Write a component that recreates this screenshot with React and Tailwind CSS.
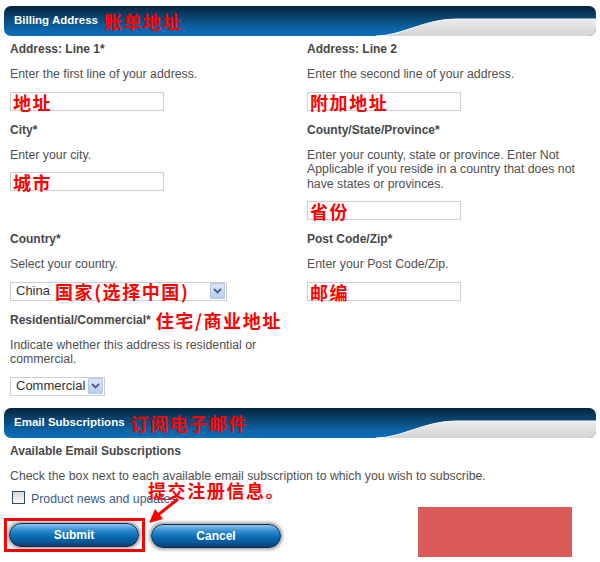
import React from 'react';

const sans = { fontFamily: '"Liberation Sans", Arial, sans-serif' };

// red hand-written notes laid over the form
function Note({ children, className = '' }) {
  return (
    <span
      className={`font-bold text-[18px] leading-none tracking-[1.6px] text-[#ff0000] ${className}`}
      style={{ fontFamily: '"Noto Sans CJK SC", "Noto Sans", sans-serif' }}
    >
      {children}
    </span>
  );
}

function SectionBar({ id, title, note }) {
  return (
    <div className="relative mx-[4px] h-[30px] overflow-hidden rounded-[7px]">
      <svg className="absolute inset-0 h-full w-full" viewBox="0 0 592 30" preserveAspectRatio="none">
        <defs>
          <linearGradient id={`${id}-blue`} x1="0" y1="0" x2="0" y2="1">
            <stop offset="0" stopColor="#05233d" />
            <stop offset="0.4" stopColor="#0a4774" />
            <stop offset="0.75" stopColor="#0a63a6" />
            <stop offset="1" stopColor="#0b70bb" />
          </linearGradient>
          <linearGradient id={`${id}-gray`} x1="0" y1="0" x2="0" y2="1">
            <stop offset="0" stopColor="#ececec" />
            <stop offset="1" stopColor="#d4d4d4" />
          </linearGradient>
        </defs>
        <rect width="592" height="30" fill={`url(#${id}-blue)`} />
        <path d="M372 30 C398 30 420 13 452 13 L592 13 L592 30 Z" fill={`url(#${id}-gray)`} />
        <path d="M372 30 C398 30 420 13 452 13 L592 13" fill="none" stroke="#f7f7f7" strokeWidth="1" />
      </svg>
      <div className="relative flex h-full items-center pl-[10px]">
        <span className="text-[11.5px] font-bold text-white">{title}</span>
        <Note className="ml-[6px]">{note}</Note>
      </div>
    </div>
  );
}

function Field({ label, labelNote, desc, children }) {
  return (
    <div className="flex flex-col items-start pb-[12px]">
      <div className="flex h-[15px] items-center">
        <span className="text-[12px] font-bold leading-[15px] text-[#474747]">{label}</span>
        {labelNote && <Note className="ml-[5px]">{labelNote}</Note>}
      </div>
      <p className="mt-[10px] text-[12.3px] leading-[14.5px] text-[#505050]">{desc}</p>
      <div className="mt-[10px]">{children}</div>
    </div>
  );
}

function TextBox({ value }) {
  return (
    <div className="flex h-[19px] w-[154px] items-center overflow-visible border border-[#cfcfcf] bg-white pl-[2px] pt-[1px]">
      <Note>{value}</Note>
    </div>
  );
}

function SelectBox({ width, value, note }) {
  return (
    <div className={`flex h-[19px] items-center border border-[#cfcfcf] bg-white pl-[5px] pr-[1px] ${width}`}>
      <span className="text-[13px] text-[#333]">{value}</span>
      {note && <Note className="ml-[5px]">{note}</Note>}
      <div className="ml-auto flex h-[16px] w-[15px] items-center justify-center rounded-[1px] border border-[#b5c7e8] bg-[linear-gradient(to_bottom,#dbe6f8,#b9cdef)]">
        <svg width="9" height="6" viewBox="0 0 9 6">
          <path d="M1 1 L4.5 4.5 L8 1" fill="none" stroke="#4d5f82" strokeWidth="1.8" />
        </svg>
      </div>
    </div>
  );
}

function BlueButton({ children }) {
  return (
    <button className="flex h-[24px] w-[130px] items-center justify-center rounded-full border border-[#0a2c4c] bg-[linear-gradient(to_bottom,#8cc2ec_0%,#2e8ad0_30%,#0a6cb4_55%,#0a5898_80%,#073f70_100%)] text-[12px] font-bold text-white shadow-[0_0_3px_2px_rgba(70,70,70,0.45)]">
      {children}
    </button>
  );
}

export default function App() {
  return (
    <div className="relative h-[562px] w-[600px] overflow-hidden bg-white pt-[6px]" style={sans}>
      <SectionBar id="billing" title="Billing Address" note="账单地址" />

      <div className="mt-[6px] grid grid-cols-[297px_1fr] pl-[10px]">
        <Field label="Address: Line 1*" desc="Enter the first line of your address.">
          <TextBox value="地址" />
        </Field>
        <Field label="Address: Line 2" desc="Enter the second line of your address.">
          <TextBox value="附加地址" />
        </Field>

        <Field label="City*" desc="Enter your city.">
          <TextBox value="城市" />
        </Field>
        <Field
          label="County/State/Province*"
          desc={<>Enter your county, state or province. Enter Not<br />Applicable if you reside in a country that does not<br />have states or provinces.</>}
        >
          <TextBox value="省份" />
        </Field>

        <div>
          <Field label="Country*" desc="Select your country.">
            <SelectBox width="w-[217px]" value="China" note="国家(选择中国)" />
          </Field>
          <Field
            label="Residential/Commercial*"
            labelNote="住宅/商业地址"
            desc={<>Indicate whether this address is residential or<br />commercial.</>}
          >
            <SelectBox width="w-[95px]" value="Commercial" />
          </Field>
        </div>
        <Field label="Post Code/Zip*" desc="Enter your Post Code/Zip.">
          <TextBox value="邮编" />
        </Field>
      </div>

      <SectionBar id="email" title="Email Subscriptions" note="订阅电子邮件" />

      <div className="mt-[6px] pl-[10px]">
        <div className="h-[15px] text-[12px] font-bold leading-[15px] text-[#474747]">
          Available Email Subscriptions
        </div>
        <p className="mt-[10px] text-[12.3px] leading-[14.5px] text-[#505050]">
          Check the box next to each available email subscription to which you wish to subscribe.
        </p>
        <label className="mt-[8px] flex h-[13px] items-center pl-[2px]">
          <span className="h-[13px] w-[13px] border border-[#2f4c76] bg-[linear-gradient(to_bottom,#d8d8d8,#fbfbfb)]" />
          <span className="ml-[6px] mt-[3px] text-[12.3px] text-[#3a5d8c]">Product news and updates</span>
        </label>
      </div>

      {/* ── Buttons ── */}
      <div className="mt-[14px] flex items-center pl-[4px]">
        <div className="flex h-[34px] w-[141px] items-start border-[3px] border-[#ff0000] pl-[2px] pt-[2px]">
          <BlueButton>Submit</BlueButton>
        </div>
        <div className="ml-[6px] mt-[2px]">
          <BlueButton>Cancel</BlueButton>
        </div>
      </div>

      {/* annotation + arrow */}
      <Note className="absolute left-[148px] top-[481px]">提交注册信息。</Note>
      <svg className="absolute left-[145px] top-[492px]" width="40" height="35" viewBox="145 492 40 35">
        <line x1="178" y1="499" x2="158" y2="515" stroke="#ff0000" strokeWidth="3" />
        <polygon points="149,523 155,509 163,519" fill="#ff0000" />
      </svg>

      <div className="absolute left-[418px] top-[507px] h-[50px] w-[154px] bg-[#db5b5b]" />
    </div>
  );
}
